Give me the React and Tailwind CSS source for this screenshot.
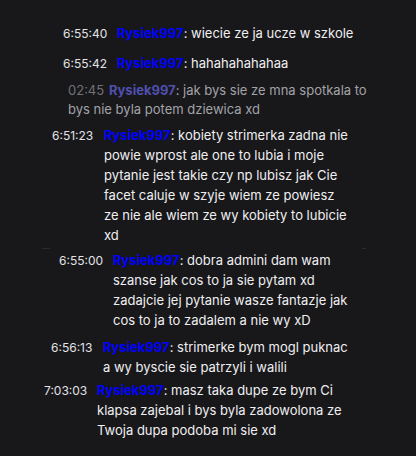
import React from "react";

function Row({ ts, tsClass, rowClass, lines }) {
  return (
    <div className={"flex items-baseline " + rowClass}>
      <div className={"shrink-0 text-[12px] text-[#e2e2e6] " + tsClass}>{ts}</div>
      <div className="text-[#efeff1]">
        {lines.map((l, i) => (
          <div key={i} className="whitespace-nowrap">
            {i === 0 ? (
              <>
                <span className="font-bold text-[#0000ff]">Rysiek997</span>
                <span>: </span>
                {l}
              </>
            ) : (
              l
            )}
          </div>
        ))}
      </div>
    </div>
  );
}

export default function App() {
  return (
    <div className="w-[416px] h-[456px] bg-[#18181b] text-[13px] leading-[20px] pt-[23px] overflow-hidden font-['Inter','Noto_Sans',sans-serif]">
      <div className="flex flex-col">
        <Row ts="6:55:40" tsClass="w-[54px]" rowClass="ml-[63px]" lines={["wiecie ze ja ucze w szkole"]} />
        <Row ts="6:55:42" tsClass="w-[54px]" rowClass="ml-[63px] mt-[9px]" lines={["hahahahahahaa"]} />
        <div className="ml-[68px] mt-[7px] leading-[19px]">
          <div className="flex items-baseline whitespace-nowrap">
            <span className="w-[41px] shrink-0 text-[#717177]">02:45</span>
            <span className="font-bold text-[#4f4fae]">Rysiek997</span>
            <span className="text-[#a3a3a8]">: jak bys sie ze mna spotkala to</span>
          </div>
          <div className="whitespace-nowrap text-[#a3a3a8]">bys nie byla potem dziewica xd</div>
        </div>
        <Row
          ts="6:51:23"
          tsClass="w-[52px]"
          rowClass="ml-[52px] mt-[6px]"
          lines={[
            "kobiety strimerka zadna nie",
            "powie wprost ale one to lubia i moje",
            "pytanie jest takie czy np lubisz jak Cie",
            "facet caluje w szyje wiem ze powiesz",
            "ze nie ale wiem ze wy kobiety to lubicie",
            "xd",
          ]}
        />
        <div className="ml-[42px] mt-[3px] w-[324px] h-px flex justify-between">
          <div className="w-[8px] h-px bg-[#2a2a2e]" />
          <div className="w-[4px] h-px bg-[#2a2a2e]" />
        </div>
        <Row
          ts="6:55:00"
          tsClass="w-[54px]"
          rowClass="ml-[59px] mt-px"
          lines={[
            "dobra admini dam wam",
            "szanse jak cos to ja sie pytam xd",
            "zadajcie jej pytanie wasze fantazje jak",
            "cos to ja to zadalem a nie wy xD",
          ]}
        />
        <Row
          ts="6:56:13"
          tsClass="w-[52px]"
          rowClass="ml-[51px] mt-[7px]"
          lines={["strimerke bym mogl puknac", "a wy byscie sie patrzyli i walili"]}
        />
        <Row
          ts="7:03:03"
          tsClass="w-[53px]"
          rowClass="ml-[44px] mt-[3px]"
          lines={[
            "masz taka dupe ze bym Ci",
            "klapsa zajebal i bys byla zadowolona ze",
            "Twoja dupa podoba mi sie xd",
          ]}
        />
      </div>
    </div>
  );
}
